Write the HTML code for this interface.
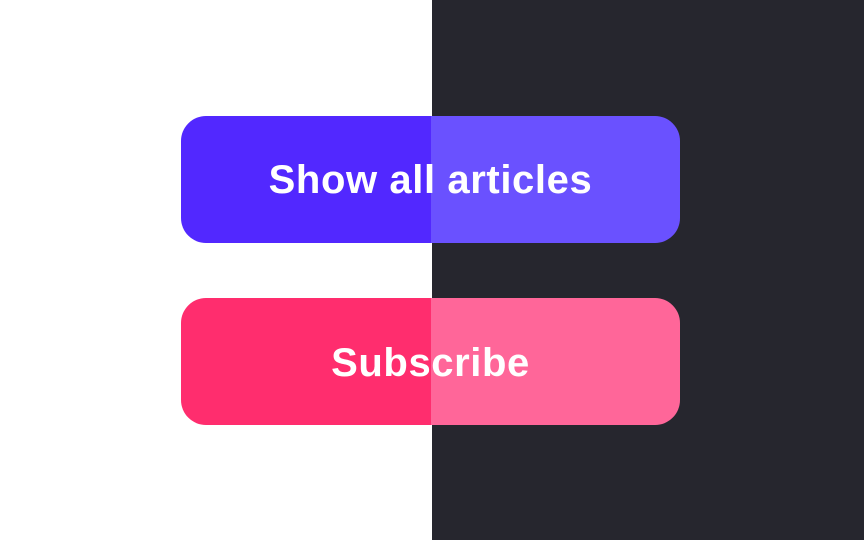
<!DOCTYPE html>
<html><head><meta charset="utf-8"><style>
html,body{margin:0;padding:0;width:864px;height:540px;overflow:hidden;}
body{background:linear-gradient(to right,#ffffff 0,#ffffff 432px,#26262e 432px,#26262e 100%);position:relative;font-family:"Liberation Sans",sans-serif;}
.btn{position:absolute;left:181px;width:499px;height:127px;border-radius:25px;color:#fff;font-weight:bold;font-size:40px;display:flex;align-items:center;justify-content:center;letter-spacing:0.6px;}
.b1{top:116px;background:linear-gradient(to right,#5228ff 0,#5228ff 250px,#6a51ff 250px);}
.b2{top:298px;background:linear-gradient(to right,#ff2d6e 0,#ff2d6e 250px,#ff6699 250px);}
</style></head><body>
<div class="btn b1"><span style="position:relative;top:1px;left:0px">Show all articles</span></div>
<div class="btn b2"><span style="position:relative;top:2px;left:0px">Subscribe</span></div>
</body></html>
